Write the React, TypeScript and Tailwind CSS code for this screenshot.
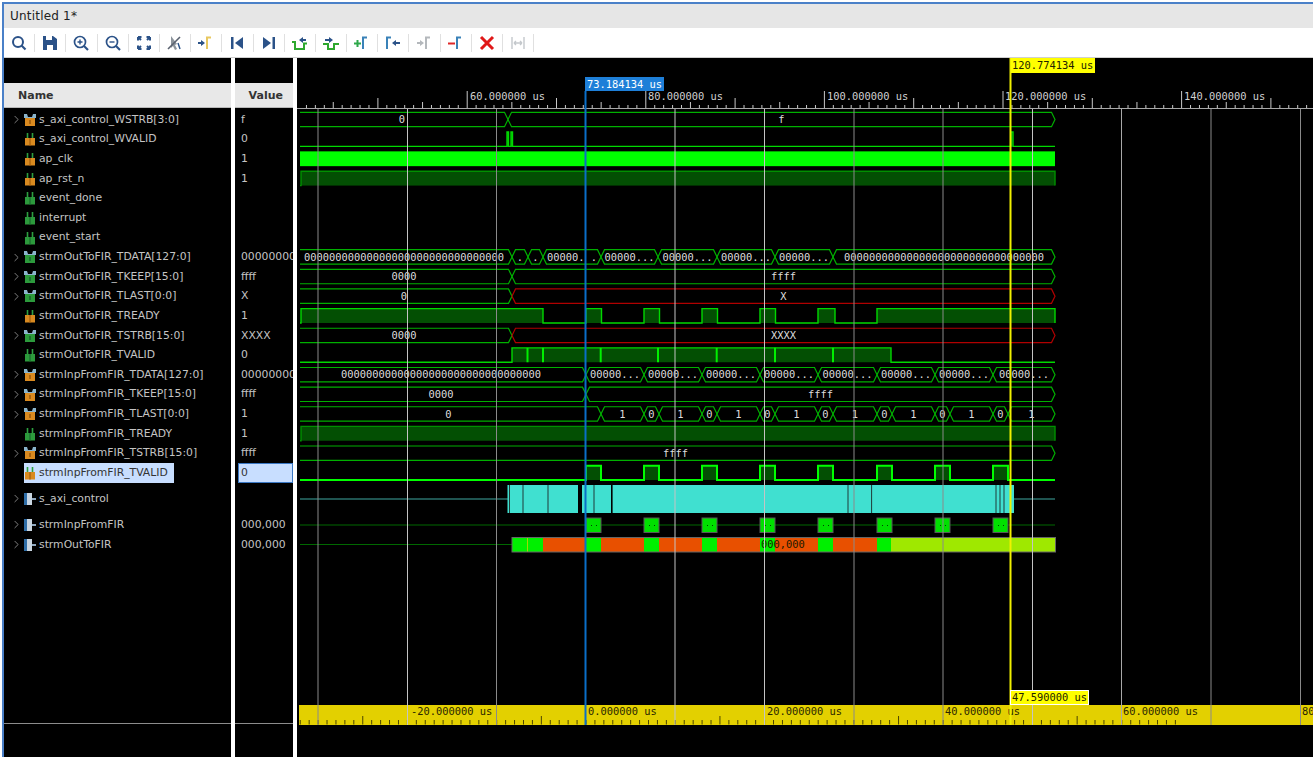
import { ChevronRight } from "lucide-react";

/** Vivado-style waveform viewer. The wave SVG uses page coordinates through its viewBox. */

type Kind = "in" | "busIn" | "out" | "busOut" | "group";

const rows: {
  name: string;
  value?: string;
  kind: Kind;
  expand?: boolean;
  selected?: boolean;
  h: string;
}[] = [
  { name: "s_axi_control_WSTRB[3:0]", value: "f", kind: "busIn", expand: true, h: "h-[19.63px]" },
  { name: "s_axi_control_WVALID", value: "0", kind: "in", h: "h-[19.63px]" },
  { name: "ap_clk", value: "1", kind: "in", h: "h-[19.63px]" },
  { name: "ap_rst_n", value: "1", kind: "in", h: "h-[19.63px]" },
  { name: "event_done", kind: "out", h: "h-[19.63px]" },
  { name: "interrupt", kind: "out", h: "h-[19.63px]" },
  { name: "event_start", kind: "out", h: "h-[19.63px]" },
  { name: "strmOutToFIR_TDATA[127:0]", value: "0000000000000000", kind: "busOut", expand: true, h: "h-[19.63px]" },
  { name: "strmOutToFIR_TKEEP[15:0]", value: "ffff", kind: "busOut", expand: true, h: "h-[19.63px]" },
  { name: "strmOutToFIR_TLAST[0:0]", value: "X", kind: "busOut", expand: true, h: "h-[19.63px]" },
  { name: "strmOutToFIR_TREADY", value: "1", kind: "in", h: "h-[19.63px]" },
  { name: "strmOutToFIR_TSTRB[15:0]", value: "XXXX", kind: "busOut", expand: true, h: "h-[19.63px]" },
  { name: "strmOutToFIR_TVALID", value: "0", kind: "out", h: "h-[19.63px]" },
  { name: "strmInpFromFIR_TDATA[127:0]", value: "0000000000000000", kind: "busIn", expand: true, h: "h-[19.63px]" },
  { name: "strmInpFromFIR_TKEEP[15:0]", value: "ffff", kind: "busIn", expand: true, h: "h-[19.63px]" },
  { name: "strmInpFromFIR_TLAST[0:0]", value: "1", kind: "busIn", expand: true, h: "h-[19.63px]" },
  { name: "strmInpFromFIR_TREADY", value: "1", kind: "out", h: "h-[19.63px]" },
  { name: "strmInpFromFIR_TSTRB[15:0]", value: "ffff", kind: "busIn", expand: true, h: "h-[19.63px]" },
  { name: "strmInpFromFIR_TVALID", value: "0", kind: "in", selected: true, h: "h-[19.63px]" },
  { name: "s_axi_control", kind: "group", expand: true, h: "h-[32px]" },
  { name: "strmInpFromFIR", value: "000,000", kind: "group", expand: true, h: "h-[20px]" },
  { name: "strmOutToFIR", value: "000,000", kind: "group", expand: true, h: "h-[19.6px]" },
];

function SignalIcon({ kind }: { kind: Kind }) {
  if (kind === "group") {
    return (
      <svg width="12" height="14" viewBox="0 0 12 14" className="shrink-0">
        <rect x="0" y="1" width="3" height="12" fill="#2f6ea8" />
        <rect x="3" y="1" width="5" height="12" fill="#c9d6e2" />
        <rect x="8" y="6" width="4" height="2" fill="#8fa8c0" />
      </svg>
    );
  }
  const body = kind === "in" || kind === "busIn" ? "#d98a20" : "#2c9a3c";
  const bus = kind === "busIn" || kind === "busOut";
  return (
    <svg width="12" height="14" viewBox="0 0 12 14" className="shrink-0">
      {bus ? (
        <>
          <path d="M0 1h3l1 3h4l1-3h3v4H0z" fill="#8ab4cc" />
          <rect x="1" y="5" width="10" height="8" fill={body} />
          <rect x="5" y="7" width="2" height="4" fill={kind === "busIn" ? "#a86410" : "#1c7030"} />
        </>
      ) : (
        <>
          <path d="M3.5 7V1M8.5 7V1" stroke="#2ca040" strokeWidth="1.6" />
          <rect x="1" y="6" width="10" height="7.5" fill={body} />
          <path d="M6 6v7.5" stroke={kind === "in" ? "#a86410" : "#1c7030"} strokeWidth="1.4" />
        </>
      )}
    </svg>
  );
}

const NAVY = "#2b5288";
const GRAY = "#b4b8bc";

function Pulse({ x = 10, color }: { x?: number; color: string }) {
  return <path d={`M${x} 15V3.5h4`} fill="none" stroke={color} strokeWidth="2" />;
}

const toolIcons = [
  <>
    <circle cx="8" cy="8" r="5" fill="none" stroke={NAVY} strokeWidth="2" />
    <path d="M11.5 11.5l4 4" stroke={NAVY} strokeWidth="2.2" />
  </>,
  <path d="M2 2h10l4 3v11H2zM5 2v4h6V2zM6 11h6v5H6z" fill={NAVY} fillRule="evenodd" />,
  <>
    <circle cx="8" cy="8" r="5.5" fill="none" stroke={NAVY} strokeWidth="1.7" />
    <path d="M5.5 8h5M8 5.5v5" stroke={NAVY} strokeWidth="1.4" />
    <path d="M12 12l4 4" stroke={NAVY} strokeWidth="2.2" />
  </>,
  <>
    <circle cx="8" cy="8" r="5.5" fill="none" stroke={NAVY} strokeWidth="1.7" />
    <path d="M5.5 8h5" stroke={NAVY} strokeWidth="1.4" />
    <path d="M12 12l4 4" stroke={NAVY} strokeWidth="2.2" />
  </>,
  <path
    d="M3 3l3 3M3 3h3.5M3 3v3.5M15 3l-3 3M15 3h-3.5M15 3v3.5M3 15l3-3M3 15h3.5M3 15v-3.5M15 15l-3-3M15 15h-3.5M15 15v-3.5"
    stroke={NAVY}
    strokeWidth="2"
    fill="none"
  />,
  <>
    <path d="M5 2l6 8-2 1 2 4-2 1-2-4-2 2z" fill="#8c949c" />
    <path d="M2 15L14 3" stroke="#5a6270" strokeWidth="1.6" />
    <path d="M12 9l2 6" stroke={NAVY} strokeWidth="1.4" />
  </>,
  <>
    <path d="M1 8h3V6l4 3-4 3v-2H1z" fill={NAVY} />
    <Pulse color="#e8c860" />
  </>,
  <>
    <rect x="3" y="3" width="2.5" height="12" fill={NAVY} />
    <path d="M15 3v12L7 9z" fill={NAVY} />
  </>,
  <>
    <rect x="12.5" y="3" width="2.5" height="12" fill={NAVY} />
    <path d="M3 3v12l8-6z" fill={NAVY} />
  </>,
  <>
    <path d="M1 8h3v7h9V9.5h3" fill="none" stroke="#2ea82e" strokeWidth="2" />
    <path d="M15 5h-3V3L8 6l4 3V7h3z" fill={NAVY} />
  </>,
  <>
    <path d="M1 10h5v5h6v-5h5" fill="none" stroke="#2ea82e" strokeWidth="2" />
    <path d="M3 5h4V3l4 3-4 3V7H3z" fill={NAVY} />
  </>,
  <>
    <path d="M1 9.5h7M4.5 6v7" stroke="#2ea84a" strokeWidth="2" />
    <Pulse color="#3a82b8" />
  </>,
  <>
    <Pulse x={3} color="#3a82b8" />
    <path d="M16 8h-4V6l-4 3 4 3v-2h4z" fill={NAVY} />
  </>,
  <>
    <path d="M1 8h3V6l4 3-4 3v-2H1z" fill={GRAY} />
    <Pulse color={GRAY} />
  </>,
  <>
    <path d="M1 9.5h7" stroke="#e02828" strokeWidth="2" />
    <Pulse color="#3a82b8" />
  </>,
  <path d="M3 3l12 12M15 3L3 15" stroke="#e01818" strokeWidth="3" />,
  <path d="M3 3v12M15 3v12M5 9h8M5 9l2-2M5 9l2 2M13 9l-2-2M13 9l-2 2" stroke="#c4c8cc" strokeWidth="1.4" fill="none" />,
];

const GREEN = "#00b000";
const RED = "#b00000";
const MONO = "font-['DejaVu_Sans_Mono',monospace]";
const START = 300;
const END = 1055;

const cy = (n: number) => 119.5 + 19.63 * n;

type Seg = { x0: number; x1: number; label: string; color?: string };

function Bus({ n, segs }: { n: number; segs: Seg[] }) {
  const c = cy(n);
  const t = c - 7.2;
  const b = c + 7.2;
  return (
    <g>
      {segs.map((s, i) => {
        const first = s.x0 === START;
        const l = first ? `M${s.x0} ${t}` : `M${s.x0} ${c}L${s.x0 + 3.5} ${t}`;
        const r = `H${s.x1 - 3.5}L${s.x1} ${c}L${s.x1 - 3.5} ${b}`;
        const close = first ? `H${s.x0}` : `H${s.x0 + 3.5}Z`;
        // the first value is centred on its span from just left of the visible start
        const mid = ((first ? 296 : s.x0) + s.x1) / 2;
        return (
          <g key={i}>
            <path d={l + r + close} fill="none" stroke={s.color ?? GREEN} strokeWidth="1.2" />
            <text x={mid} y={c + 3.6} textAnchor="middle" className={`${MONO} text-[10.4px] fill-[#dddddd]`}>
              {s.label}
            </text>
          </g>
        );
      })}
    </g>
  );
}

function Digital({
  n,
  highs,
  thick,
  dim,
}: {
  n: number;
  highs: [number, number][];
  thick?: boolean;
  dim?: boolean;
}) {
  const c = cy(n);
  const t = c - 7.2;
  const b = c + 7.2;
  let d = `M${START} ${b}`;
  highs.forEach(([a, z]) => {
    d += `H${a}V${t}H${z}V${b}`;
  });
  d += `H${END}`;
  return (
    <g>
      {highs.map(([a, z]) => (
        <rect key={a} x={a} y={t} width={z - a} height={b - t} fill="#034f03" />
      ))}
      <path d={d} fill="none" stroke={thick ? "#00ff00" : dim ? "#009000" : "#00d800"} strokeWidth={thick ? 2 : 1.4} />
    </g>
  );
}

const pulses: [number, number][] = [
  [586, 601],
  [644, 659],
  [702, 717],
  [760, 775],
  [818, 833],
  [877, 892],
  [935, 950],
  [993, 1008],
];

const ZEROS = "00000000000000000000000000000000";

const outData: Seg[] = [
  { x0: START, x1: 512, label: ZEROS },
  { x0: 512, x1: 528, label: "." },
  { x0: 528, x1: 543, label: "." },
  { x0: 543, x1: 601, label: "00000. ." },
  { x0: 601, x1: 658, label: "00000..." },
  { x0: 658, x1: 717, label: "00000..." },
  { x0: 717, x1: 775, label: "00000..." },
  { x0: 775, x1: 833, label: "00000..." },
  { x0: 833, x1: END, label: ZEROS },
];

const inpData: Seg[] = [
  { x0: START, x1: 586, label: ZEROS },
  ...pulses.map(([a], i) => ({
    x0: a,
    x1: i < pulses.length - 1 ? pulses[i + 1][0] : END,
    label: "00000...",
  })),
];

const inpLast: Seg[] = [
  { x0: START, x1: 601, label: "0" },
  ...pulses.flatMap(([a, z], i) => {
    const next = i < pulses.length - 1 ? pulses[i + 1][0] : END;
    const out: Seg[] = [];
    if (i > 0) out.push({ x0: a, x1: z, label: "0" });
    out.push({ x0: z, x1: next, label: "1" });
    return out;
  }),
];

const cyanDividers = [509.5, 523, 548, 594, 848, 871.6, 996, 1000, 1004];
const grid: [number, string][] = [
  [318, "#8a8a8a"],
  [407.5, "#c4c4c4"],
  [496.5, "#8a8a8a"],
  [675, "#c4c4c4"],
  [764.5, "#c4c4c4"],
  [854, "#8a8a8a"],
  [943, "#8a8a8a"],
  [1032.5, "#c4c4c4"],
  [1121.5, "#a8a8a8"],
  [1211, "#8a8a8a"],
  [1300.5, "#8a8a8a"],
];

const topTicks = Array.from({ length: 160 }, (_, i) => i - 80).map((k) => {
  const x = 1003 + 8.93 * k;
  const y = k % 20 === 0 ? 91 : k % 10 === 0 ? 98 : k % 5 === 0 ? 102 : 105;
  return { x, y };
});

const bottomTicks = Array.from({ length: 100 }, (_, i) => i - 33).map((k) => {
  const x = 586 + 8.93 * k;
  return { x, y: (k + 5) % 20 === 0 ? 716 : 720 };
});

function Waves() {
  return (
    <svg width="1016" height="699" viewBox="297 58 1016 699" className="block">
      <rect x="297" y="58" width="1016" height="699" fill="#000000" />

      {/* top time ruler */}
      <path d="M297 108.5H1313" stroke="#a8a8a8" />
      {topTicks
        .filter((t) => t.x >= 300 && t.x <= 1313)
        .map((t, i) => (
          <path key={i} d={`M${t.x} ${t.y}V108`} stroke="#c8c8c8" />
        ))}
      {[
        [470, "60.000000 us"],
        [648, "80.000000 us"],
        [827, "100.000000 us"],
        [1005, "120.000000 us"],
        [1184, "140.000000 us"],
      ].map(([x, label]) => (
        <text key={label} x={x} y={100} className={`${MONO} text-[10.4px] fill-[#d0d0d0]`}>
          {label}
        </text>
      ))}

      <Bus
        n={0}
        segs={[
          { x0: START, x1: 508, label: "0" },
          { x0: 508, x1: END, label: "f" },
        ]}
      />
      <Digital n={1} highs={[[507, 508.5], [511, 512.5], [1011, 1013]]} />
      <rect x={START} y={cy(2) - 7.4} width={END - START} height={14.8} fill="#00ff00" />
      <Digital n={3} highs={[[301, END]]} dim />
      <Bus n={7} segs={outData} />
      <Bus
        n={8}
        segs={[
          { x0: START, x1: 512, label: "0000" },
          { x0: 512, x1: END, label: "ffff" },
        ]}
      />
      <Bus
        n={9}
        segs={[
          { x0: START, x1: 512, label: "0" },
          { x0: 512, x1: END, label: "X", color: RED },
        ]}
      />
      <Digital
        n={10}
        highs={[[301, 543], [586, 601.5], [644, 659.5], [702, 717.5], [760, 775.5], [818, 835], [877, END]]}
      />
      <Bus
        n={11}
        segs={[
          { x0: START, x1: 512, label: "0000" },
          { x0: 512, x1: END, label: "XXXX", color: RED },
        ]}
      />
      <Digital n={12} highs={[[512, 891]]} />
      {[527.5, 543, 600.7, 658, 716.7, 775, 833].map((x) => (
        <path key={x} d={`M${x} ${cy(12) - 7.2}V${cy(12) + 7.2}`} stroke="#00f000" strokeWidth="2" />
      ))}
      <Bus n={13} segs={inpData} />
      <Bus
        n={14}
        segs={[
          { x0: START, x1: 586, label: "0000" },
          { x0: 586, x1: END, label: "ffff" },
        ]}
      />
      <Bus n={15} segs={inpLast} />
      <Digital n={16} highs={[[301, END]]} dim />
      <Bus n={17} segs={[{ x0: START, x1: END, label: "ffff" }]} />
      <Digital n={18} highs={pulses} thick />

      {/* s_axi_control transaction row */}
      <path d={`M${START} 499H${END}`} stroke="#3fa8a0" />
      <rect x="507.5" y="485" width="506.5" height="28" fill="#40e0d0" />
      <rect x="578" y="484" width="4" height="30" fill="#000000" />
      <rect x="611" y="484" width="1.6" height="30" fill="#000000" />
      {cyanDividers.map((x) => (
        <path key={x} d={`M${x} 485V513`} stroke="#1f3a38" />
      ))}

      {/* strmInpFromFIR transactions */}
      <path d={`M${START} 525H${END}`} stroke="#006800" />
      {pulses.map(([a, z]) => (
        <g key={a}>
          <rect x={a} y={518} width={z - a} height={14.5} fill="#00e000" stroke="#585858" />
          <path d={`M${a + 5} 525.5h1M${a + 10} 525.5h1`} stroke="#004000" />
        </g>
      ))}

      {/* strmOutToFIR transactions */}
      <path d={`M${START} 544.5H512`} stroke="#006800" />
      <rect x="512" y="537.5" width="543.5" height="14.5" fill="#e85000" />
      {[[512, 543], [586, 601], [644, 659], [702, 717], [760, 775], [818, 833], [877, 891]].map(([a, z]) => (
        <rect key={a} x={a} y="537.5" width={z - a} height="14.5" fill="#00f000" />
      ))}
      <rect x="891" y="537.5" width="164.5" height="14.5" fill="#9fe800" />
      <path d="M527.5 537.5V552" stroke="#a0d800" />
      <rect x="512" y="537.5" width="543.5" height="14.5" fill="none" stroke="#666666" />
      <text x="761" y="548" className={`${MONO} text-[10.4px] fill-[#1a1a00]`}>
        000,000
      </text>

      {/* bottom delta ruler */}
      <rect x="299" y="705" width="1014" height="20" fill="#e3d000" />
      {bottomTicks
        .filter((t) => t.x >= 300 && t.x <= 1313)
        .map((t, i) => (
          <path key={i} d={`M${t.x} ${t.y}V724.5`} stroke="#4a4400" />
        ))}
      {[
        [411, "-20.000000 us"],
        [588, "0.000000 us"],
        [767, "20.000000 us"],
        [945, "40.000000 us"],
        [1123, "60.000000 us"],
        [1302, "80.000000 us"],
      ].map(([x, label]) => (
        <text key={label} x={x} y={715} className={`${MONO} text-[10.4px] fill-[#2a2600]`}>
          {label}
        </text>
      ))}

      {grid.map(([x, color]) => (
        <path key={x} d={`M${x} 109V725`} stroke={color} />
      ))}

      {/* cursors and their flags */}
      <path d="M585.5 91V725" stroke="#0a6fc8" strokeWidth="2" />
      <rect x="585" y="77" width="79" height="14" fill="#1e7fd8" />
      <text x="587" y="87.5" className={`${MONO} text-[10.4px] fill-white`}>
        73.184134 us
      </text>
      <path d="M1010.5 58V725" stroke="#f0f000" strokeWidth="2" />
      <rect x="1011" y="58" width="84" height="15" fill="#ffff00" />
      <text x="1012" y="69" className={`${MONO} text-[10.4px] fill-[#222200]`}>
        120.774134 us
      </text>
      <rect x="1010.5" y="690.5" width="78" height="14" fill="#ffff00" stroke="#ffffff" />
      <text x="1012" y="701" className={`${MONO} text-[10.4px] fill-[#222200]`}>
        47.590000 us
      </text>
    </svg>
  );
}

export default function App() {
  return (
    <div className="w-[1313px] h-[757px] overflow-hidden bg-white pt-[2px] pl-[2px] font-['DejaVu_Sans',sans-serif]">
      <div className="flex h-full flex-col border-t-2 border-l-2 border-[#4a80c8]">
        <div className="flex h-[24px] items-center bg-[#e6e6e6] pl-[6px] text-[12px] tracking-[0.2px] text-[#222222]">
          Untitled 1*
        </div>
        <div className="flex h-[30px] items-center border-b border-[#cfcfcf] bg-white">
          {toolIcons.map((icon, i) => (
            <div key={i} className="flex h-[18px] w-[31.2px] items-center justify-center border-r border-[#e0e0e0]">
              <svg width="18" height="18" viewBox="0 0 18 18">
                {icon}
              </svg>
            </div>
          ))}
        </div>

        <div className="flex min-h-0 flex-1 bg-white">
          {/* name column */}
          <div className="flex w-[227px] flex-col bg-black">
            <div className="h-[25px]" />
            <div className="flex h-[25px] items-center border-b border-[#b8b8b8] bg-[#e8e8e8] pt-[3px] pl-[14px] text-[11px] font-bold text-[#333333]">
              Name
            </div>
            <div className="h-[2px]" />
            {rows.map((r) => (
              <div key={r.name} className={`flex items-center pl-[6px] text-[10.8px] text-[#c4c4c4] ${r.h}`}>
                <div className="flex w-[14px] shrink-0 items-center">
                  {r.expand && <ChevronRight size={13} strokeWidth={1.5} className="text-[#9a9a9a]" />}
                </div>
                <div className={`flex h-full items-center gap-[3px] ${r.selected ? "bg-[#c8deff] pr-[6px] text-[#333333]" : ""}`}>
                  <SignalIcon kind={r.kind} />
                  <span className="whitespace-nowrap">{r.name}</span>
                </div>
              </div>
            ))}
            <div className="flex-1" />
            <div className="h-px bg-[#8c8c8c]" />
            <div className="h-[33px]" />
          </div>
          <div className="w-[4px] shrink-0" />

          {/* value column */}
          <div className="flex w-[58px] flex-col bg-black">
            <div className="h-[25px]" />
            <div className="flex h-[25px] items-center justify-end border-b border-[#b8b8b8] bg-[#e8e8e8] pt-[3px] pr-[10px] text-[11px] font-bold text-[#333333]">
              Value
            </div>
            <div className="h-[2px]" />
            {rows.map((r) => (
              <div
                key={r.name}
                className={`flex items-center overflow-hidden whitespace-nowrap text-[10.8px] ${r.h} ${
                  r.selected ? "ml-[3px] border border-[#3b78c4] bg-[#c8deff] pl-[2px] text-[#333333]" : "pl-[6px] text-[#c4c4c4]"
                }`}
              >
                {r.value}
              </div>
            ))}
            <div className="flex-1" />
            <div className="h-px bg-[#8c8c8c]" />
            <div className="h-[33px]" />
          </div>
          <div className="w-[4px] shrink-0" />

          <Waves />
        </div>
      </div>
    </div>
  );
}
